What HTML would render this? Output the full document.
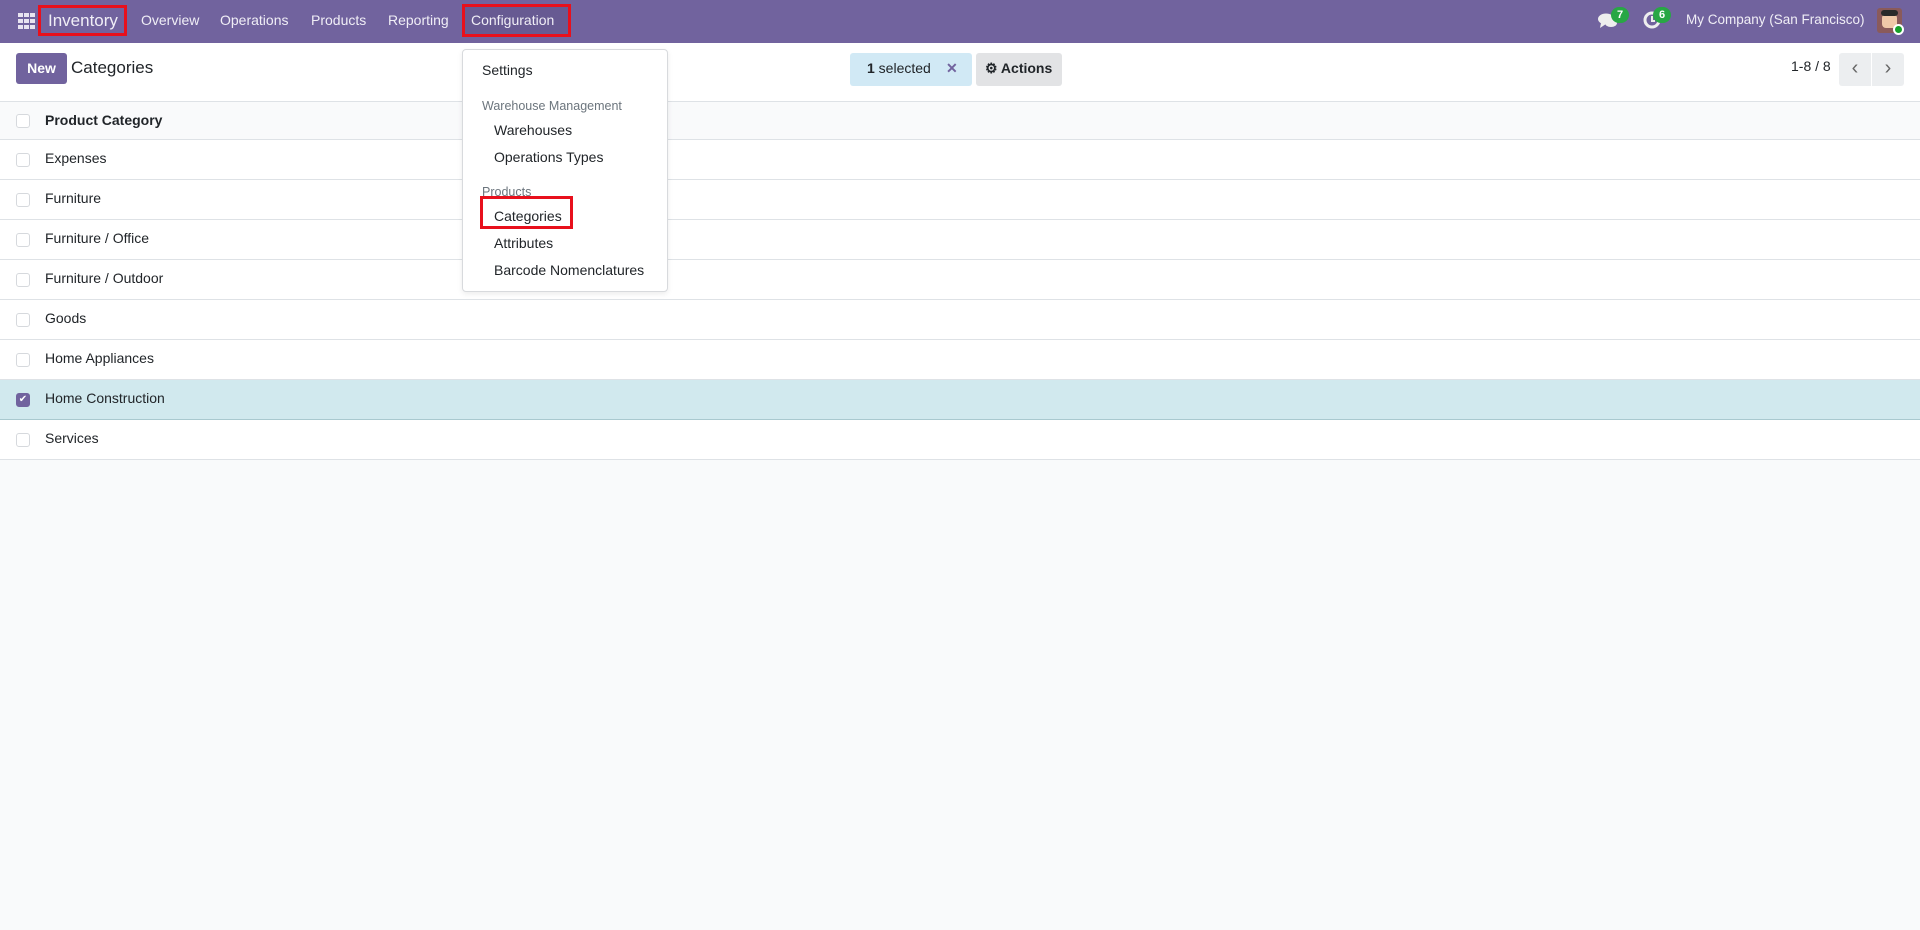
<!DOCTYPE html>
<html><head><meta charset="utf-8"><style>
*{box-sizing:border-box;margin:0;padding:0}
body{width:1920px;height:930px;background:#f9fafb;font-family:"Liberation Sans",sans-serif;color:#212529;position:relative;overflow:hidden;font-size:14px}
.nav{position:absolute;left:0;top:0;width:1920px;height:43px;background:#71639e;color:#fff}
.nav span{position:absolute;top:12px;font-size:14px;color:#f0eef6}
.red{position:absolute;border:3px solid #e8101c}
.ctrl{position:absolute;left:0;top:43px;width:1920px;height:59px;background:#fff;border-bottom:1px solid #dee2e6}
.row{position:absolute;left:0;width:1920px;height:40px;border-bottom:1px solid #dee2e6;background:#fff}
.row .cb{position:absolute;left:16px;top:13px;width:14px;height:14px;border:1px solid #d6d9dd;border-radius:3px;background:#fff}
.row .t{position:absolute;left:45px;top:10px;font-size:14px}
.dd{position:absolute;left:462px;top:49px;width:206px;height:243px;background:#fff;border:1px solid #d8dadd;border-radius:4px;box-shadow:0 2px 6px rgba(0,0,0,.08)}
.dd div{position:absolute;font-size:14px;color:#212529}
.dd .h{font-size:12.5px;color:#6c757d}
</style></head><body>
<div class="nav">
<svg style="position:absolute;left:18px;top:13px" width="17" height="16" viewBox="0 0 17 16" fill="#e8e4f0"><rect x="0" y="0" width="5" height="4"/><rect x="6" y="0" width="5" height="4"/><rect x="12" y="0" width="5" height="4"/><rect x="0" y="6" width="5" height="4"/><rect x="6" y="6" width="5" height="4"/><rect x="12" y="6" width="5" height="4"/><rect x="0" y="12" width="5" height="4"/><rect x="6" y="12" width="5" height="4"/><rect x="12" y="12" width="5" height="4"/></svg>
<div class="red" style="left:38px;top:5px;width:89px;height:31px"></div>
<span style="left:48px;top:11px;font-size:17px">Inventory</span>
<span style="left:141px">Overview</span>
<span style="left:220px">Operations</span>
<span style="left:311px">Products</span>
<span style="left:388px">Reporting</span>
<div style="position:absolute;left:462px;top:4px;width:109px;height:33px;background:#675a92"></div>
<div class="red" style="left:462px;top:4px;width:109px;height:33px"></div>
<span style="left:471px">Configuration</span>
<svg style="position:absolute;left:1598px;top:13px" width="20" height="16" viewBox="0 0 20 16" fill="#eee"><ellipse cx="8" cy="6" rx="8" ry="5.5"/><path d="M3 10 L2 15 L8 11Z"/><ellipse cx="13" cy="10" rx="6" ry="4"/></svg>
<div style="position:absolute;left:1611px;top:7px;width:18px;height:16px;border-radius:8px;background:#28a745;font-size:11px;font-weight:bold;text-align:center;line-height:16px">7</div>
<svg style="position:absolute;left:1643px;top:11px" width="18" height="18" viewBox="0 0 18 18"><circle cx="9" cy="9" r="7" fill="none" stroke="#eee" stroke-width="3"/><path d="M9 5v5h3" stroke="#eee" stroke-width="2" fill="none"/></svg>
<div style="position:absolute;left:1653px;top:7px;width:18px;height:16px;border-radius:8px;background:#28a745;font-size:11px;font-weight:bold;text-align:center;line-height:16px">6</div>
<span style="left:1686px;font-size:13.5px">My Company (San Francisco)</span>
<div style="position:absolute;left:1877px;top:8px;width:25px;height:25px;border-radius:3px;background:#8a5a5a"><div style="position:absolute;left:5px;top:6px;width:15px;height:14px;background:#f0c8a8;border-radius:4px"></div><div style="position:absolute;left:4px;top:2px;width:17px;height:6px;background:#2a2a2a;border-radius:3px"></div></div>
<div style="position:absolute;left:1893px;top:24px;width:11px;height:11px;border-radius:50%;background:#17a02a;border:2px solid #fff"></div>
</div>
<div class="ctrl">
<div style="position:absolute;left:16px;top:10px;width:51px;height:31px;background:#71639e;border-radius:3px;color:#fff;font-weight:bold;font-size:14px;text-align:center;line-height:31px">New</div>
<div style="position:absolute;left:71px;top:15px;font-size:17px">Categories</div>
<div style="position:absolute;left:850px;top:10px;width:122px;height:33px;background:#d1e9f5;border-radius:3px;font-size:14px;line-height:31px;padding-left:17px"><b>1</b> selected <span style="position:absolute;left:96px;color:#71639e;font-weight:bold">✕</span></div>
<div style="position:absolute;left:976px;top:10px;width:86px;height:33px;background:#e2e3e5;border-radius:3px;font-size:14px;line-height:31px;padding-left:9px;font-weight:bold">⚙ Actions</div>
<div style="position:absolute;left:1791px;top:15px;font-size:14px">1-8 / 8</div>
<div style="position:absolute;left:1839px;top:10px;width:32px;height:33px;background:#eceef0;border-radius:3px 0 0 3px;color:#666;text-align:center;line-height:31px;font-size:20px">‹</div>
<div style="position:absolute;left:1872px;top:10px;width:32px;height:33px;background:#eceef0;border-radius:0 3px 3px 0;color:#666;text-align:center;line-height:31px;font-size:20px">›</div>
</div>
<div class="row" style="top:102px;height:38px;background:#f9fafb"><div class="cb" style="top:12px"></div><div class="t" style="font-weight:bold">Product Category</div></div>
<div class="row" style="top:140px"><div class="cb"></div><div class="t">Expenses</div></div>
<div class="row" style="top:180px"><div class="cb"></div><div class="t">Furniture</div></div>
<div class="row" style="top:220px"><div class="cb"></div><div class="t">Furniture / Office</div></div>
<div class="row" style="top:260px"><div class="cb"></div><div class="t">Furniture / Outdoor</div></div>
<div class="row" style="top:300px"><div class="cb"></div><div class="t">Goods</div></div>
<div class="row" style="top:340px"><div class="cb"></div><div class="t">Home Appliances</div></div>
<div class="row" style="top:380px;background:#d1e9ee;border-bottom-color:#a9c9cf"><div class="cb" style="background:#71639e;border-color:#71639e;color:#fff;font-size:10px;text-align:center;line-height:12px">✔</div><div class="t">Home Construction</div></div>
<div class="row" style="top:420px"><div class="cb"></div><div class="t">Services</div></div>
<div class="dd">
<div style="left:19px;top:12px">Settings</div>
<div class="h" style="left:19px;top:49px">Warehouse Management</div>
<div style="left:31px;top:72px">Warehouses</div>
<div style="left:31px;top:99px">Operations Types</div>
<div class="h" style="left:19px;top:135px">Products</div>
<div style="left:31px;top:158px">Categories</div>
<div style="left:31px;top:185px">Attributes</div>
<div style="left:31px;top:212px">Barcode Nomenclatures</div>
</div>
<div class="red" style="left:480px;top:196px;width:93px;height:33px"></div>
</body></html>
